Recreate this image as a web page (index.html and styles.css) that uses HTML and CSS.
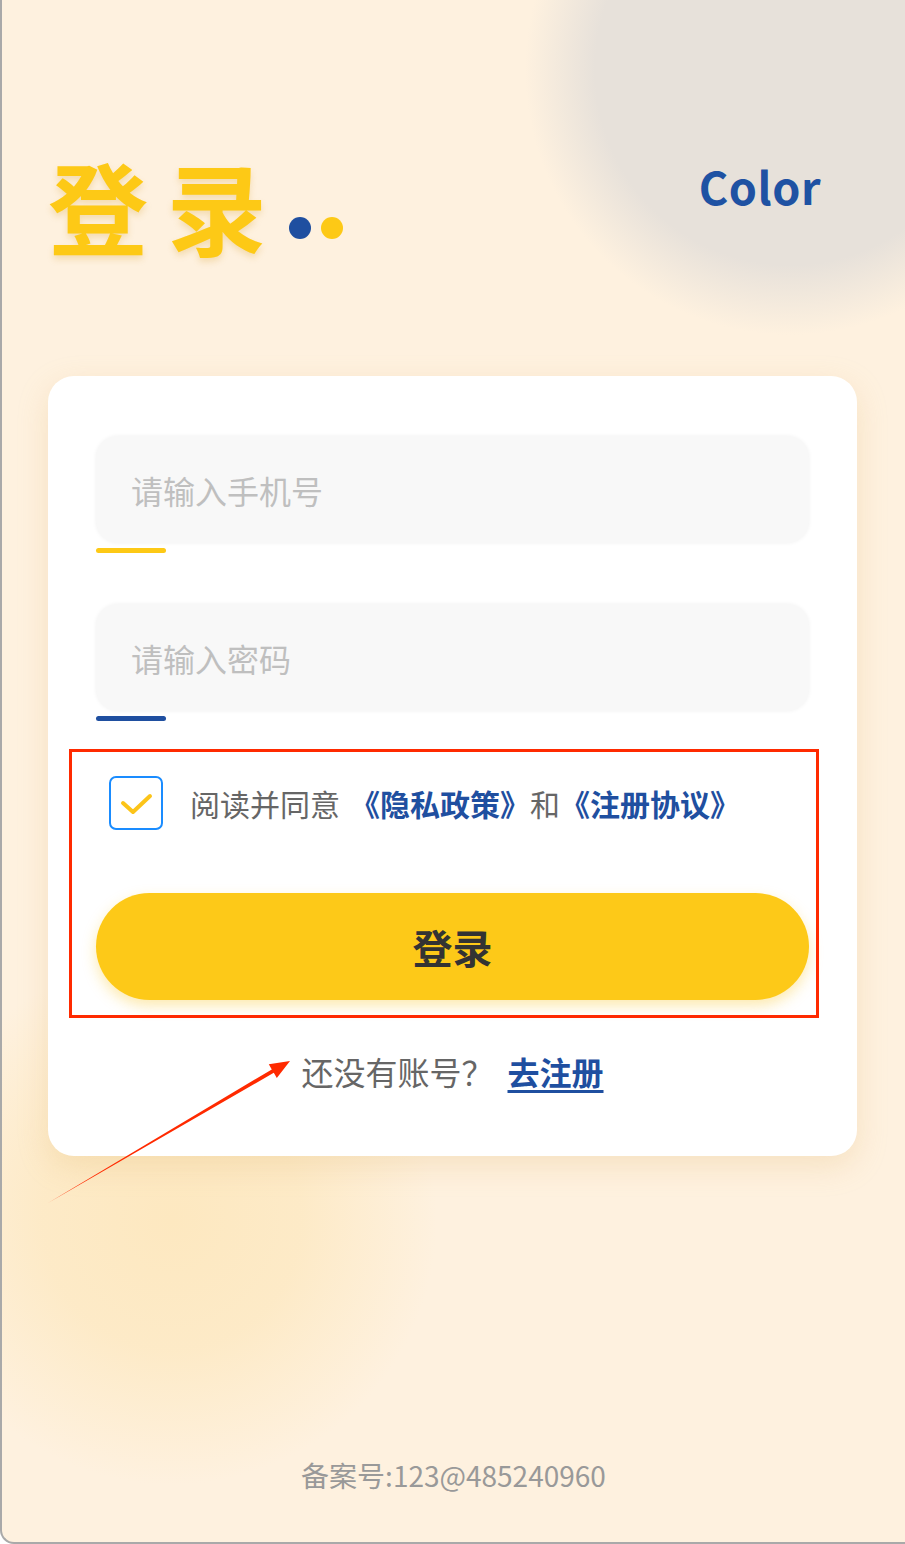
FILE: index.html
```html
<!DOCTYPE html>
<html lang="zh-CN">
<head>
<meta charset="utf-8">
<title>登录</title>
<link rel="stylesheet" href="styles.css">
</head>
<body>
<div class="screen">
  <header class="top">
    <div class="title">
      <h1 class="title-text">登 录</h1>
      <span class="dot dot-blue"></span>
      <span class="dot dot-yellow"></span>
    </div>
    <div class="brand">Color</div>
  </header>

  <main class="card">
    <div class="field">
      <input class="input" type="text" placeholder="请输入手机号">
      <span class="bar bar-yellow"></span>
    </div>
    <div class="field field-2">
      <input class="input" type="password" placeholder="请输入密码">
      <span class="bar bar-blue"></span>
    </div>

    <label class="agree">
      <span class="checkbox">
        <svg width="34" height="24" viewBox="0 0 34 24"><polyline points="4,12 14,21 31,5" fill="none" stroke="#fcc419" stroke-width="4" stroke-linecap="round" stroke-linejoin="round"/></svg>
      </span>
      <span class="agree-text">阅读并同意<a class="link link-first">《隐私政策》</a>和<a class="link">《注册协议》</a></span>
    </label>

    <button class="login" type="button">登录</button>

    <p class="register">还没有账号？<a class="reg-link">去注册</a></p>
  </main>

  <footer class="footer">备案号:123@485240960</footer>

  <div class="annot-box"></div>
  <svg class="annot-arrow" width="905" height="1544" viewBox="0 0 905 1544">
    <polygon points="48,1203 273.8,1072.8 276.8,1078 290,1061 268.8,1064.2 271.8,1069.4" fill="#ff2a00"/>
  </svg>
</div>
</body>
</html>
```

FILE: styles.css
```css
* { box-sizing: border-box; }

html, body {
  margin: 0;
  padding: 0;
}

body {
  font-family: "Noto Sans CJK SC", "Noto Sans", sans-serif;
  background: #ffffff;
}

.screen {
  position: relative;
  width: 905px;
  height: 1544px;
  display: flex;
  flex-direction: column;
  overflow: hidden;
  border-left: 2px solid #a9a9a9;
  border-bottom: 2px solid #a9a9a9;
  border-bottom-left-radius: 14px;
  background:
    radial-gradient(circle at 788px 70px, #e7e1da 0, #e7e1da 195px, rgba(231,225,218,0) 265px),
    radial-gradient(circle at 170px 1220px, #fde8c0 0, rgba(253,233,195,0.85) 130px, rgba(253,236,205,0) 265px),
    #fef1df;
}

.top {
  display: flex;
  justify-content: space-between;
  align-items: flex-start;
  padding: 155px 84px 0 46px;
}

.title {
  display: flex;
  align-items: flex-end;
}

.title-text {
  margin: 0;
  font-size: 100px;
  line-height: 1;
  font-weight: 700;
  color: #fdc916;
  letter-spacing: -2px;
  white-space: pre;
  text-shadow: 0 4px 6px rgba(214, 160, 40, 0.25);
}

.dot {
  width: 22px;
  height: 22px;
  border-radius: 50%;
  margin-bottom: 16px;
}

.dot-blue {
  background: #1f4fa0;
  margin-left: 24px;
}

.dot-yellow {
  background: #fdc916;
  margin-left: 10px;
}

.brand {
  margin-top: 8px;
  font-size: 45px;
  line-height: 1;
  font-weight: 700;
  letter-spacing: 0.5px;
  color: #1f52a3;
}

.card {
  margin: 121px 48px 0 46px;
  padding: 60px 48px 58px;
  background: #ffffff;
  border-radius: 26px;
  box-shadow: 0 10px 30px rgba(226, 186, 120, 0.28);
  display: flex;
  flex-direction: column;
}

.field {
  display: flex;
  flex-direction: column;
}

.field-2 {
  margin-top: 51px;
}

.input {
  height: 107px;
  width: 100%;
  border: none;
  outline: none;
  border-radius: 22px;
  background: #f8f8f8;
  box-shadow: 0 0 4px rgba(0, 0, 0, 0.06);
  padding: 0 0 0 35px;
  font-family: inherit;
  font-size: 32px;
  color: #333;
}

.input::placeholder {
  color: #bfbfbf;
}

.bar {
  margin-top: 5px;
  width: 70px;
  height: 5px;
  border-radius: 3px;
}

.bar-yellow { background: #fdc916; }
.bar-blue { background: #1f4fa0; }

.agree {
  margin-top: 55px;
  display: flex;
  align-items: center;
  padding-left: 13px;
}

.checkbox {
  width: 54px;
  height: 54px;
  border: 2px solid #1a8cff;
  border-radius: 7px;
  display: flex;
  align-items: center;
  justify-content: center;
  flex-shrink: 0;
}

.agree-text {
  margin-left: 27px;
  font-size: 30px;
  line-height: 40px;
  color: #666666;
}

.link {
  color: #1f4fa0;
  font-weight: 700;
}

.link-first {
  margin-left: 10px;
}

.login {
  margin-top: 63px;
  height: 107px;
  width: 100%;
  border: none;
  border-radius: 54px;
  background: #fdc918;
  box-shadow: 0 6px 14px rgba(250, 196, 30, 0.35);
  font-family: inherit;
  font-size: 40px;
  font-weight: 700;
  color: #333333;
}

.register {
  margin: 47px 0 0;
  text-align: center;
  font-size: 32px;
  line-height: 48px;
  color: #666666;
  padding-bottom: 3px;
}

.reg-link {
  margin-left: 14px;
  color: #1f4fa0;
  font-weight: 700;
  text-decoration: underline;
  text-underline-offset: 5px;
}

.footer {
  margin-top: auto;
  padding-bottom: 47px;
  text-align: center;
  font-size: 28px;
  line-height: 40px;
  color: #999999;
}

.annot-box {
  position: absolute;
  left: 67px;
  top: 749px;
  width: 750px;
  height: 269px;
  border: 3px solid #ff2a00;
  pointer-events: none;
}

.annot-arrow {
  position: absolute;
  left: -2px;
  top: 0;
  pointer-events: none;
}
```
